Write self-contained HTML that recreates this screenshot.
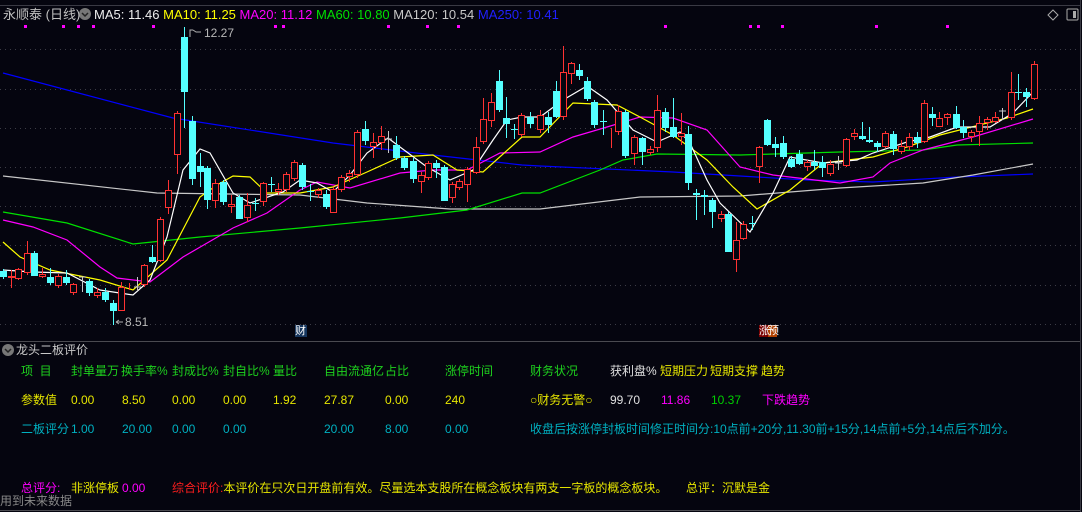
<!DOCTYPE html>
<html><head><meta charset="utf-8">
<style>
html,body{margin:0;padding:0;background:#05050f;}
body{width:1082px;height:512px;overflow:hidden;position:relative;font-family:"Liberation Sans","Noto Sans CJK SC",sans-serif;font-size:12px;}
.t{position:absolute;white-space:nowrap;line-height:14px;}
.g{color:#1ed21e}.y{color:#e6e600}.c{color:#00b0c0}.m{color:#ff00ff}.w{color:#e0e0e0}.r{color:#ff1e1e}
</style></head><body>
<svg id="ch" width="1082" height="512" style="position:absolute;left:0;top:0" xmlns="http://www.w3.org/2000/svg">
<line x1="0" y1="5.5" x2="1080" y2="5.5" stroke="#3a3a44"/>
<line x1="1080.5" y1="0" x2="1080.5" y2="512" stroke="#3a3a44"/>
<line x1="0" y1="341.5" x2="1080" y2="341.5" stroke="#4a4a50"/>
<line x1="0" y1="510.5" x2="1080" y2="510.5" stroke="#4a4a50"/>
<g stroke="#3c3c46" stroke-dasharray="1,4">
<line x1="0" y1="49.5" x2="1080" y2="49.5"/><line x1="0" y1="89.5" x2="1080" y2="89.5"/>
<line x1="0" y1="128.5" x2="1080" y2="128.5"/><line x1="0" y1="167.5" x2="1080" y2="167.5"/>
<line x1="0" y1="206.5" x2="1080" y2="206.5"/><line x1="0" y1="245.5" x2="1080" y2="245.5"/>
<line x1="0" y1="285.5" x2="1080" y2="285.5"/><line x1="0" y1="324.5" x2="1080" y2="324.5"/>
</g>
<g fill="none" stroke-width="1.2">
<polyline stroke="#0000ff" points="3,73 173,118 333,143 433,155 522,165 540,166 673,172 807,180 873,182 957,177 1033,174"/>
<polyline stroke="#c8c8c8" points="3,176 157,193 300,195 367,203 450,209 540,209 640,197 740,196 840,188 923,183 973,175 1033,164"/>
<polyline stroke="#00e000" points="3,212 67,223 133,244 200,237 300,228 400,218 467,210 522,193 540,193 600,170 623,160 657,154 740,155 840,152 923,150 957,145 1033,143"/>
<polyline stroke="#ff00ff" points="3,220 33,227 67,240 100,267 117,278 150,282 183,257 233,228 267,213 300,190 317,182 350,188 400,173 433,170 467,170 500,153 540,152 573,137 607,127 640,117 673,118 707,130 740,167 773,175 840,183 873,177 890,163 923,150 973,137 1033,119"/>
<polyline stroke="#ffff00" points="3,242 20,257 50,270 100,280 133,290 167,260 200,197 217,185 233,176 250,177 267,193 300,193 333,187 367,172 400,157 433,155 457,170 483,172 522,137 540,137 573,103 617,105 640,117 673,135 707,160 733,187 757,209 790,190 823,163 873,157 907,147 940,135 1007,118 1033,109"/>
<polyline stroke="#ffffff" points="3,270 33,272 67,273 100,290 133,295 150,280 167,237 183,170 200,149 210,153 233,193 250,203 283,192 300,180 317,183 333,192 350,175 367,153 388,138 400,147 427,167 450,180 473,170 493,140 507,120 522,117 540,117 563,100 587,86 607,100 633,130 657,142 680,132 690,143 707,180 720,203 750,232 773,193 790,157 823,163 857,160 873,153 907,142 930,137 957,127 990,127 1013,113 1033,92"/>
</g>
<g id="cd"></g>
<g fill="#ff00ff" id="dots"></g>
<g stroke="#b0b0b0" fill="none"><path d="M190,37 V30 h3 M193,30 l3,2 h5"/><path d="M116,322 l3,-2 M116,322 l3,2 M116,322 h7"/></g>
<rect x="295" y="325" width="12" height="12" fill="#16365e"/>
<rect x="759" y="325" width="9" height="12" fill="#7a0000"/><rect x="768" y="325" width="9" height="12" fill="#b04000"/>
<path d="M1053,10 l5,5 -5,5 -5,-5z" fill="none" stroke="#aaa"/>
<rect x="1067" y="9" width="11" height="11" rx="1" fill="none" stroke="#aaa"/><rect x="1073" y="11" width="3" height="7" fill="#aaa"/>
<circle cx="85" cy="14" r="6" fill="#777"/><path d="M82,13 l3,3 3,-3" stroke="#222" fill="none" stroke-width="1.5"/>
<circle cx="8" cy="350" r="6" fill="#777"/><path d="M5,349 l3,3 3,-3" stroke="#222" fill="none" stroke-width="1.5"/>
</svg>
<div class="t" style="left:3px;top:8px;color:#c0c0c0;font-size:13px">永顺泰 (日线)</div>
<div class="t" style="left:94px;top:8px;font-size:13px"><span style="color:#eee">MA5: 11.46</span> <span style="color:#ffff00">MA10: 11.25</span> <span style="color:#ff00ff">MA20: 11.12</span> <span style="color:#00e000">MA60: 10.80</span> <span style="color:#c8c8c8">MA120: 10.54</span> <span style="color:#2020ff">MA250: 10.41</span></div>
<div class="t" style="left:204px;top:26px;color:#b8b8b8;font-size:12px">12.27</div>
<div class="t" style="left:125px;top:315px;color:#b8b8b8;font-size:12px">8.51</div>
<div class="t" style="left:295px;top:324px;color:#fff;font-size:11px">财</div>
<div class="t" style="left:759px;top:324px;color:#fff;font-size:11px;letter-spacing:-2px">涨预</div>
<div class="t" style="left:16px;top:343px;color:#c8c8c8;font-size:12px">龙头二板评价</div>

<div class="t g" style="left:21px;top:364px">项 &nbsp;目</div>
<div class="t g" style="left:71px;top:364px">封单量万</div>
<div class="t g" style="left:121px;top:364px">换手率%</div>
<div class="t g" style="left:172px;top:364px">封成比%</div>
<div class="t g" style="left:223px;top:364px">封自比%</div>
<div class="t g" style="left:273px;top:364px">量比</div>
<div class="t g" style="left:324px;top:364px">自由流通亿</div>
<div class="t g" style="left:385px;top:364px">占比</div>
<div class="t g" style="left:445px;top:364px">涨停时间</div>
<div class="t g" style="left:530px;top:364px">财务状况</div>
<div class="t w" style="left:610px;top:364px">获利盘%</div>
<div class="t y" style="left:660px;top:364px">短期压力</div>
<div class="t y" style="left:710px;top:364px">短期支撑</div>
<div class="t y" style="left:761px;top:364px">趋势</div>

<div class="t y" style="left:21px;top:393px">参数值</div>
<div class="t y" style="left:71px;top:393px">0.00</div>
<div class="t y" style="left:122px;top:393px">8.50</div>
<div class="t y" style="left:172px;top:393px">0.00</div>
<div class="t y" style="left:223px;top:393px">0.00</div>
<div class="t y" style="left:273px;top:393px">1.92</div>
<div class="t y" style="left:324px;top:393px">27.87</div>
<div class="t y" style="left:385px;top:393px">0.00</div>
<div class="t y" style="left:445px;top:393px">240</div>
<div class="t y" style="left:530px;top:393px">○财务无警○</div>
<div class="t w" style="left:610px;top:393px">99.70</div>
<div class="t m" style="left:661px;top:393px">11.86</div>
<div class="t" style="left:711px;top:393px;color:#00d000">10.37</div>
<div class="t m" style="left:762px;top:393px">下跌趋势</div>

<div class="t c" style="left:21px;top:422px">二板评分</div>
<div class="t c" style="left:71px;top:422px">1.00</div>
<div class="t c" style="left:122px;top:422px">20.00</div>
<div class="t c" style="left:172px;top:422px">0.00</div>
<div class="t c" style="left:223px;top:422px">0.00</div>
<div class="t c" style="left:324px;top:422px">20.00</div>
<div class="t c" style="left:385px;top:422px">8.00</div>
<div class="t c" style="left:445px;top:422px">0.00</div>
<div class="t c" style="left:530px;top:422px">收盘后按涨停封板时间修正时间分:10点前+20分,11.30前+15分,14点前+5分,14点后不加分。</div>

<div class="t m" style="left:21px;top:481px">总评分:</div>
<div class="t y" style="left:71px;top:481px">非涨停板</div>
<div class="t m" style="left:122px;top:481px">0.00</div>
<div class="t" style="left:172px;top:481px"><span class="r">综合评价:</span><span class="y">本评价在只次日开盘前有效。尽量选本支股所在概念板块有两支一字板的概念板块。</span></div>
<div class="t y" style="left:686px;top:481px">总评：沉默是金</div>
<div class="t" style="left:0px;top:494px;color:#888">用到未来数据</div>

<script>
var C=[
[3,0,271,277,269,279],[11,1,276,278,270,288],[18,1,269,279,268,280],[27,1,253,273,241,275],[34,0,253,276,251,276],[42,1,274,277,268,278],[50,0,277,283,268,285],[58,1,276,286,274,288],[66,0,277,283,270,285],[73,1,284,293,283,295],[82,2,277,292,277,292],[89,0,281,293,279,296],[97,1,292,296,288,298],[105,0,292,300,288,302],[113,0,303,311,300,325],[121,1,287,311,282,311],[129,1,286,287,283,290],[137,2,287,288,277,291],[144,1,265,285,264,287],[152,0,257,262,245,263],[160,1,219,261,217,262],[168,1,190,208,180,214],[177,1,113,155,111,174],[184,0,37,92,27,128],[192,0,121,179,116,185],[200,0,166,172,153,187],[207,0,168,200,166,209],[215,1,183,201,179,208],[223,0,182,202,180,205],[231,1,204,207,195,213],[239,0,197,219,195,219],[247,1,205,218,193,222],[255,0,203,204,198,211],[263,1,183,202,182,206],[271,0,184,185,177,192],[278,1,189,192,183,195],[286,1,174,190,172,192],[294,1,162,179,160,181],[302,0,165,187,163,190],[310,0,191,192,184,201],[318,1,190,195,188,198],[326,0,194,207,190,209],[333,1,189,213,187,213],[341,1,177,190,175,192],[349,1,173,177,170,182],[357,1,132,175,130,178],[365,0,129,141,121,145],[373,1,142,147,133,158],[381,1,136,143,126,150],[388,2,139,140,131,153],[396,0,145,158,136,160],[404,0,158,168,156,170],[413,0,161,179,158,183],[421,1,175,182,172,193],[428,1,163,178,161,180],[436,0,163,168,160,178],[444,0,167,201,165,201],[452,1,184,198,182,203],[459,1,181,188,179,190],[467,1,169,185,167,202],[476,1,147,173,137,174],[483,1,119,142,98,144],[491,1,102,121,93,127],[499,0,81,110,70,112],[506,0,118,124,97,138],[514,0,129,130,124,139],[521,1,115,135,113,137],[530,0,117,124,112,128],[540,1,115,130,110,133],
[548,0,117,125,112,133],[556,0,91,117,81,118],[563,1,72,117,46,120],[571,1,63,74,62,84],[579,0,70,76,64,80],[587,0,81,99,77,101],[594,0,102,125,100,128],[603,0,121,122,110,135],[611,1,133,134,128,148],[618,1,111,132,105,135],[625,0,112,156,110,158],[634,1,137,154,135,165],[642,0,138,152,137,165],[650,1,149,153,146,155],[657,1,110,148,95,152],[665,0,112,128,108,132],[673,0,127,137,98,138],[681,1,133,137,113,145],[688,0,134,183,126,190],[696,0,193,195,189,220],[704,0,195,197,190,215],[712,0,200,212,198,228],[721,1,214,219,211,222],[728,0,214,252,212,252],[736,1,240,260,222,272],[743,1,224,239,221,240],[752,0,223,224,216,230],[759,1,147,167,146,183],[767,0,120,145,119,146],[775,0,144,148,137,157],[783,0,143,157,136,159],[791,0,159,167,156,168],[799,0,154,164,150,165],[807,1,162,167,160,171],[814,0,162,166,150,170],[822,0,162,168,156,177],[830,1,164,174,160,176],[838,2,163,164,156,170],[846,1,139,166,138,167],[854,1,133,137,129,140],[862,0,136,139,122,140],[869,0,140,142,127,143],[877,0,143,147,141,152],[885,1,133,147,131,148],[893,0,134,149,131,155],[901,1,146,152,140,154],[909,1,137,147,133,150],[917,0,137,143,132,148],[924,1,103,142,100,143],[932,0,114,118,107,126],[939,1,118,127,112,125],[947,1,114,118,113,125],[956,0,114,128,106,129],[963,0,127,133,120,138],[971,1,132,137,130,142],[979,1,123,132,116,146],[987,1,119,123,117,130],[995,1,117,122,112,123],[1002,2,111,112,108,120],[1011,1,92,118,72,120],[1018,0,92,93,74,100],[1026,0,92,97,88,107],[1034,1,64,99,61,100]];
var s='';
C.forEach(function(c){var x=c[0],t=c[2],b=c[3],h=c[4],l=c[5];
var col=c[1]==1?'#ff3232':(c[1]==0?'#54ffff':'#c8c8c8');
if(b-t<1)b=t+1;
s+='<line x1="'+(x+.5)+'" y1="'+h+'" x2="'+(x+.5)+'" y2="'+l+'" stroke="'+col+'"/>';
if(c[1]==1)s+='<rect x="'+(x-2.5)+'" y="'+(t+.5)+'" width="6" height="'+(b-t-1)+'" fill="#05050f" stroke="'+col+'"/>';
else if(c[1]==0)s+='<rect x="'+(x-3)+'" y="'+t+'" width="7" height="'+(b-t)+'" fill="'+col+'"/>';
else s+='<line x1="'+(x-3)+'" y1="'+t+'" x2="'+(x+4)+'" y2="'+t+'" stroke="'+col+'"/>';});
document.getElementById('cd').innerHTML=s;
var D=[25,63,78,93,153,275,283,388,427,458,665,750,758,782,876,947],d='';
D.forEach(function(x){d+='<rect x="'+(x-1)+'" y="25" width="3" height="3"/>';});
document.getElementById('dots').innerHTML=d;
</script>
</body></html>
